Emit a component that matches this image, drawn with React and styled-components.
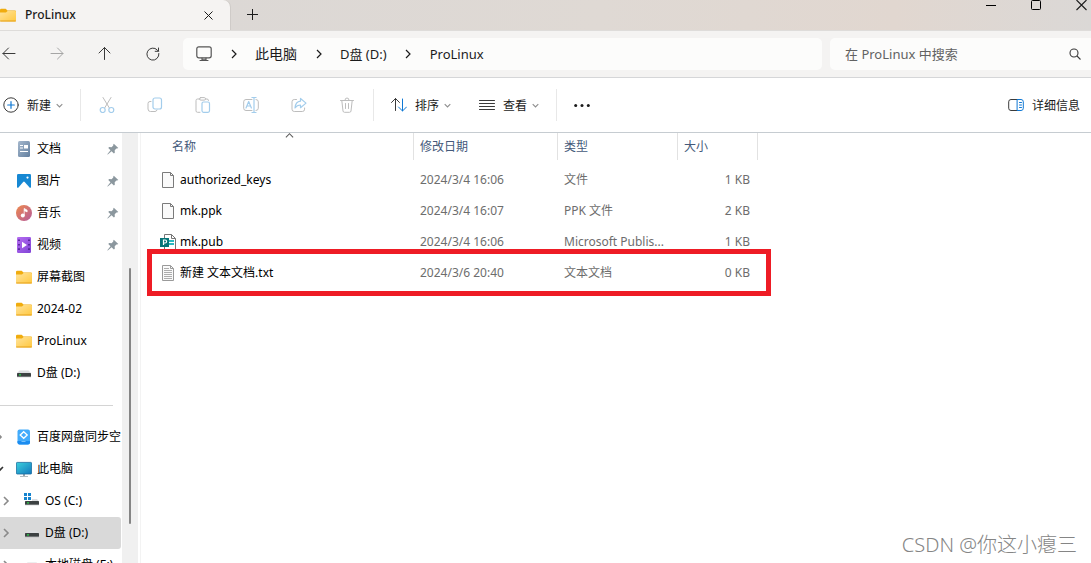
import styled, { createGlobalStyle } from "styled-components";

const GlobalStyle = createGlobalStyle`
  * {
    box-sizing: border-box;
  }

  body {
    margin: 0;
    overflow: hidden;
    font-family: "Noto Sans", "Noto Sans CJK SC", sans-serif;
    font-size: 12px;
    line-height: 16px;
    color: #1b1b1b;
    background: #ffffff;
  }

  button,
  input {
    font: inherit;
    color: inherit;
  }

  svg {
    display: block;
    flex: none;
  }
`;

const Janela = styled.div`
  position: relative;
  display: flex;
  flex-direction: column;
  height: 100vh;
  overflow: hidden;
  background: #ffffff;
`;

const BotaoIcone = styled.button`
  display: flex;
  align-items: center;
  justify-content: center;
  flex: none;
  width: ${(p) => p.$largura || 16}px;
  height: ${(p) => p.$altura || 24}px;
  padding: 0;
  border: 0;
  background: none;
`;

/* Title bar */

const BarraTitulo = styled.header`
  display: flex;
  align-items: flex-start;
  height: 31px;
  flex: none;
  background: linear-gradient(90deg, #dcd8d5 20%, #dfd9d4 55%, #e1d7d0 82%, #dbd8d6 100%);
  border-bottom: 1px solid #dedcda;
`;

const Aba = styled.div`
  display: flex;
  align-items: center;
  width: 230px;
  height: 30px;
  padding-right: 14px;
  background: #f5f3f2;
  border-radius: 0 7px 0 0;
  box-shadow: 1px 0 0 #cfcbc8;
`;

const AbaTitulo = styled.span`
  flex: 1;
  padding-left: 9px;
  font-weight: 500;
`;

const NovaAba = styled(BotaoIcone)`
  margin-left: 14px;
`;

const Controles = styled.div`
  display: flex;
  gap: 34px;
  margin-left: auto;
  padding-right: 4px;
`;

/* Navigation bar */

const BarraNavegacao = styled.nav`
  display: flex;
  align-items: center;
  height: 47px;
  flex: none;
  padding-left: 1px;
  background: #f4f3f2;
  border-bottom: 1px solid #d5d6d8;
`;

const Setas = styled.div`
  display: flex;
  gap: 32px;
  margin-right: 22px;
`;

const Endereco = styled.div`
  display: flex;
  align-items: center;
  flex: 1;
  height: 32px;
  padding-left: 13px;
  margin-right: 8px;
  background: #fcfcfb;
  border-radius: 5px;
`;

const Separador = styled.span`
  display: flex;
  justify-content: center;
  width: 43px;
`;

const Caminho = styled.a`
  color: #1b1b1b;
  font-size: ${(p) => (p.$grande ? 14 : 13)}px;
  text-decoration: none;
  white-space: nowrap;
`;

const Busca = styled.label`
  display: flex;
  align-items: center;
  width: 261px;
  height: 32px;
  padding: 0 10px 0 15px;
  background: #fcfcfb;
  border-radius: 5px 0 0 5px;
`;

const CampoBusca = styled.input`
  flex: 1;
  min-width: 0;
  padding: 0;
  border: 0;
  outline: 0;
  background: none;
  font-size: 13px;

  &::placeholder {
    color: #626262;
    opacity: 1;
  }
`;

/* Command bar */

const BarraComandos = styled.div`
  display: flex;
  align-items: center;
  height: 55px;
  flex: none;
  padding: 0 11px 0 3px;
  border-bottom: 1px solid #c6ccd1;
`;

const Comando = styled.button`
  display: flex;
  align-items: center;
  gap: 5px;
  height: 32px;
  padding: 0;
  border: 0;
  background: none;
  white-space: nowrap;
`;

const Texto = styled.span`
  padding: 2px 0 0 3px;
`;

const Grupo = styled.div`
  display: flex;
  gap: 28px;
`;

const Divisor = styled.span`
  width: 1px;
  height: 32px;
  margin: 0 17px;
  background: #e8e8e8;
`;

const Acoes = styled.div`
  display: flex;
  gap: 32px;
  margin: 0 1px;
`;

const Detalhes = styled(Comando)`
  margin-left: auto;
`;

/* Sidebar */

const Corpo = styled.div`
  display: flex;
  flex: 1;
  min-height: 0;
`;

const Lateral = styled.aside`
  width: 122px;
  flex: none;
  overflow: hidden;
`;

const Lista = styled.ul`
  margin: 0;
  padding: 0;
  list-style: none;
`;

const ItemLateral = styled.li`
  display: flex;
  align-items: center;
  height: 32px;
  margin-right: 1px;
  padding-left: ${(p) => (p.$seta ? 0 : 16)}px;
  padding-right: ${(p) => (p.$seta ? 0 : 2)}px;
  border-radius: 0 3px 3px 0;
  background: ${(p) => (p.$ativo ? "#d9d9d9" : "none")};
  color: #000000;
`;

/* The first level's arrows run past the window's left edge */
const Seta = styled.span`
  display: flex;
  flex: none;
  width: ${(p) => (p.$recuo ? 24 : 16)}px;
  padding-left: ${(p) => (p.$recuo ? 1 : 0)}px;

  svg {
    margin-left: ${(p) => (p.$recuo ? 0 : -6)}px;
  }
`;

const LinkLateral = styled.a`
  display: flex;
  align-items: center;
  gap: 5px;
  flex: 1;
  color: inherit;
  text-decoration: none;
  white-space: nowrap;
`;

const Linha = styled.hr`
  height: 1px;
  margin: 16px 9px 15px 0;
  border: 0;
  background: #d4d4d4;
`;

const Rolagem = styled.div`
  width: 16px;
  flex: none;
  padding: 135px 7px 0;
  background: #f0f0f0;
`;

const Polegar = styled.div`
  width: 2px;
  height: 256px;
  border-radius: 1px;
  background: #858585;
`;

/* File list */

const Painel = styled.main`
  flex: 1;
  min-width: 0;
  margin-left: 2px;
  border-left: 1px solid #f3f3f3;
`;

const Tabela = styled.table`
  table-layout: fixed;
  width: 617px;
  border-collapse: collapse;
`;

const Cabecalho = styled.th`
  position: relative;
  width: ${(p) => p.$largura}px;
  padding: 0 0 4px;
  font-weight: 400;
  text-align: left;
  color: #44597a;
`;

const Rotulo = styled.div`
  height: 27px;
  padding: 6px 0 0 ${(p) => p.$recuo || 6}px;
  border-right: 1px solid #e2e2e2;
`;

const Ordem = styled.span`
  position: absolute;
  top: -2px;
  left: 144px;
`;

const LinhaArquivo = styled.tr`
  position: relative;
  height: 31px;
`;

const Celula = styled.td`
  padding: 0 8px 0 6px;
  overflow: hidden;
  text-align: ${(p) => (p.$direita ? "right" : "left")};
  text-overflow: ellipsis;
  white-space: nowrap;
  color: #6d6d6d;
`;

const Nome = styled.div`
  display: flex;
  align-items: center;
  gap: 4px;
  padding-left: 13px;
  color: #000000;
`;

const Destaque = styled.div`
  position: absolute;
  inset: -8px -13px -8px 6px;
  border: 5px solid #ee1c25;
  pointer-events: none;
`;

const Marca = styled.div`
  position: absolute;
  right: 14px;
  bottom: 4px;
  font-size: 20px;
  font-weight: 300;
  line-height: 28px;
  color: #858585;
`;

function Pasta() {
  return (
    <svg width="16" height="16" viewBox="0 0 16 16">
      <defs>
        <linearGradient id="pasta" x1="0" y1="0" x2="1" y2="1">
          <stop offset="0" stopColor="#ffe39b" />
          <stop offset="1" stopColor="#ffc83f" />
        </linearGradient>
      </defs>
      <path d="M0 3a1.2 1.2 0 0 1 1.2-1.2h4.500L7.500 3.500H15a1 1 0 0 1 1 1V7H0z" fill="#f0ac0e" />
      <path d="M0 5.600h6L7.600 4H15a1 1 0 0 1 1 1v8.500a1 1 0 0 1-1 1H1a1 1 0 0 1-1-1z" fill="url(#pasta)" />
      <path d="M.2 14h15.600" stroke="#e5a01b" />
    </svg>
  );
}

function Documento() {
  return (
    <svg width="16" height="16" viewBox="0 0 16 16">
      <defs>
        <linearGradient id="doc" x1="0" y1="0" x2="1" y2="1">
          <stop offset="0" stopColor="#a5b8cd" />
          <stop offset="1" stopColor="#637f9f" />
        </linearGradient>
      </defs>
      <rect x="2" width="12" height="16" rx="1.500" fill="url(#doc)" />
      <path d="M4 4.500h3M4 7h3M4 10.500h8" stroke="#fff" />
      <path d="M8 4h4v3.500H8z" fill="#fff" />
    </svg>
  );
}

function Imagens() {
  return (
    <svg width="16" height="16" viewBox="0 0 16 16">
      <rect x="1" y="1" width="14" height="14" rx="1.300" fill="#1688d3" />
      <path d="m2 15 5.200-6.100a1 1 0 0 1 1.500 0L14 15z" fill="#fff" />
      <circle cx="11.500" cy="4.600" r="1.100" fill="#fff" />
    </svg>
  );
}

function Musica() {
  return (
    <svg width="16" height="16" viewBox="0 0 16 16">
      <defs>
        <linearGradient id="musica" x1="0" y1="0" x2="1" y2="1">
          <stop offset="0" stopColor="#ef8a4c" />
          <stop offset="1" stopColor="#b45a9c" />
        </linearGradient>
      </defs>
      <circle cx="8" cy="8" r="8" fill="url(#musica)" />
      <circle cx="6.800" cy="10.600" r="2" fill="#fff" />
      <path d="M8.200 10.500V3.500l2.900 1.700v1.700L8.200 5.500" fill="#fff" stroke="#fff" strokeWidth=".8" />
    </svg>
  );
}

function Video() {
  return (
    <svg width="16" height="16" viewBox="0 0 16 16">
      <defs>
        <linearGradient id="video" x1="0" y1="0" x2="1" y2="1">
          <stop offset="0" stopColor="#b56cf1" />
          <stop offset="1" stopColor="#8044d6" />
        </linearGradient>
      </defs>
      <rect x="1" width="14" height="16" rx="1.200" fill="url(#video)" />
      <path d="M3 2.500v12M13 2.500v12" stroke="#4a1f8c" strokeWidth="1.600" strokeDasharray="1.600 2.800" />
      <path d="M6 4.800v6.400L11 8z" fill="#fff" />
    </svg>
  );
}

function Disco({ sistema }) {
  return (
    <svg width="16" height="16" viewBox="0 0 16 16">
      {sistema ? (
        <path d="M0 0h3v3H0zM4 0h3v3H4zM0 4h3v3H0zM4 4h3v3H4z" fill="#1583ce" />
      ) : null}
      <path d={sistema ? "M8 6h5l2 2.500H8z" : "M3.500 5.500h9L15 8H1z"} fill="#dcdee0" />
      <rect x="1" y="8" width="14" height="4" rx=".6" fill="#3c4142" />
      <path d="M1 11.700h14" stroke="#8a8f91" strokeWidth=".8" />
      <circle cx="4" cy="9.800" r=".9" fill="#27e04b" />
    </svg>
  );
}

function Nuvem() {
  return (
    <svg width="16" height="16" viewBox="0 0 16 16">
      <rect x="1.500" y=".5" width="12.500" height="15" rx="2" fill="#42abfb" />
      <path d="M1.500 12H14v1.500a2 2 0 0 1-2 2H3.500a2 2 0 0 1-2-2z" fill="#1b8cf0" />
      <path d="m7.700 2.700 3.500 3.300-3.500 3.300L4.200 6z" fill="none" stroke="#fff" strokeWidth="1.300" />
      <path d="M5.500 12.500h4" stroke="#8fd0ff" strokeWidth=".8" />
    </svg>
  );
}

function Computador() {
  return (
    <svg width="16" height="16" viewBox="0 0 16 16">
      <defs>
        <linearGradient id="pc" x1="0" y1="0" x2="1" y2="1">
          <stop offset="0" stopColor="#3bd0dd" />
          <stop offset="1" stopColor="#1378bd" />
        </linearGradient>
      </defs>
      <path d="M7 13h2v2h3v.8H4V15h3z" fill="#9aa6ad" />
      <rect x=".4" y="1.400" width="15.200" height="11.600" rx=".8" fill="url(#pc)" stroke="#17699e" strokeWidth=".8" />
    </svg>
  );
}

function Pino() {
  return (
    <svg width="12" height="12" viewBox="0 0 12 12">
      <path d="M6.800.8 11.300 5l-1.200.6-.7-.1-1.700 1.800.1 2.400-.9.800L4.600 8.200.8 11.600l-.5-.3 3.200-4.100L1.300 5l.8-.9 2.500.2 1.700-1.700-.1-.9z" fill="#8b979e" />
    </svg>
  );
}

function Divisa({ cor = "#1b1b1b", direcao = "direita", tamanho = 10, grossura = 1.2 }) {
  const caminhos = {
    direita: "M3 1l4 4-4 4",
    baixo: "M1 3l4 4 4-4",
    cima: "M1 7l4-4 4 4",
  };
  return (
    <svg width={tamanho} height={tamanho} viewBox="0 0 10 10" fill="none" stroke={cor} strokeWidth={grossura}>
      <path d={caminhos[direcao]} />
    </svg>
  );
}

function Traco({ children, cor = "#3a3a3a" }) {
  return (
    <svg
      width="16"
      height="16"
      viewBox="0 0 16 16"
      fill="none"
      stroke={cor}
      strokeLinecap="round"
      strokeLinejoin="round"
    >
      {children}
    </svg>
  );
}

function Arquivo({ tipo }) {
  if (tipo === "pub") {
    return (
      <svg width="16" height="16" viewBox="0 0 16 16">
        <path d="M4.500.5h7l4 4v11h-11z" fill="#fff" stroke="#757575" />
        <path d="M11.500.5v4h4" fill="none" stroke="#757575" />
        <path d="M9 6h5v2H9zM9 9h5v2H9z" fill="#2bb9c0" />
        <rect y="4" width="9" height="9" fill="#077578" />
        <path d="M3.500 11V6h1.600a1.500 1.500 0 0 1 0 3H3.500" fill="none" stroke="#fff" strokeWidth="1.200" />
      </svg>
    );
  }
  const contorno = tipo === "txt" ? "#9a9a9a" : "#7b7b7b";
  return (
    <svg width="16" height="16" viewBox="0 0 16 16">
      <path d="M2.500.5h8l3 3v12h-11z" fill="#fafafa" stroke={contorno} />
      <path d="M10.500.5v3h3" fill="none" stroke={contorno} />
      {tipo === "txt" ? (
        <path d="M4 3.500h5M4 5.500h8M4 7.500h8M4 9.500h8M4 11.500h8M4 13.500h8" stroke="#adadad" />
      ) : null}
    </svg>
  );
}

const fixados = [
  { nome: "文档", icone: <Documento />, pino: true },
  { nome: "图片", icone: <Imagens />, pino: true },
  { nome: "音乐", icone: <Musica />, pino: true },
  { nome: "视频", icone: <Video />, pino: true },
  { nome: "屏幕截图", icone: <Pasta /> },
  { nome: "2024-02", icone: <Pasta /> },
  { nome: "ProLinux", icone: <Pasta /> },
  { nome: "D盘 (D:)", icone: <Disco /> },
];

const unidades = [
  { nome: "OS (C:)", sistema: true },
  { nome: "D盘 (D:)", ativo: true },
  { nome: "本地磁盘 (E:)" },
];

const arquivos = [
  { nome: "authorized_keys", data: "2024/3/4 16:06", tipo: "文件", tamanho: "1 KB" },
  { nome: "mk.ppk", data: "2024/3/4 16:07", tipo: "PPK 文件", tamanho: "2 KB" },
  { nome: "mk.pub", data: "2024/3/4 16:06", tipo: "Microsoft Publis...", tamanho: "1 KB", icone: "pub" },
  { nome: "新建 文本文档.txt", data: "2024/3/6 20:40", tipo: "文本文档", tamanho: "0 KB", icone: "txt", destaque: true },
];

const azul = "#a3cdec";
const cinza = "#bdbdbd";

function App() {
  return (
    <Janela>
      <GlobalStyle />
      <BarraTitulo>
        <Aba>
          <Pasta />
          <AbaTitulo>ProLinux</AbaTitulo>
          <BotaoIcone aria-label="关闭标签页">
            <svg width="9" height="9" viewBox="0 0 9 9" stroke="#1b1b1b">
              <path d="M.5.5l8 8M8.500.5l-8 8" />
            </svg>
          </BotaoIcone>
        </Aba>
        <NovaAba $altura={29} aria-label="新标签页">
          <svg width="11" height="11" viewBox="0 0 11 11" stroke="#1b1b1b">
            <path d="M5.500 0v11M0 5.500h11" />
          </svg>
        </NovaAba>
        <Controles>
          <BotaoIcone $largura={11} $altura={11} aria-label="最小化">
            <svg width="11" height="11" viewBox="0 0 11 11" stroke="#000">
              <path d="M0 5.500h10" />
            </svg>
          </BotaoIcone>
          <BotaoIcone $largura={11} $altura={11} aria-label="最大化">
            <svg width="11" height="11" viewBox="0 0 11 11" fill="none" stroke="#000">
              <rect x=".5" y=".5" width="9" height="9" rx="1" />
            </svg>
          </BotaoIcone>
          <BotaoIcone $largura={11} $altura={11} aria-label="关闭">
            <svg width="11" height="11" viewBox="0 0 11 11" stroke="#1b1b1b" strokeWidth="1.100">
              <path d="M.5 0l10 10M10.500 0l-10 10" />
            </svg>
          </BotaoIcone>
        </Controles>
      </BarraTitulo>

      <BarraNavegacao>
        <Setas>
          <BotaoIcone aria-label="后退">
            <Traco><path d="M14 7.500H2M7.500 2 2 7.500 7.500 13" /></Traco>
          </BotaoIcone>
          <BotaoIcone aria-label="前进">
            <Traco cor="#a5a5a5"><path d="M2 7.500h12M8.500 2 14 7.500 8.500 13" /></Traco>
          </BotaoIcone>
          <BotaoIcone aria-label="向上">
            <Traco><path d="M7.500 13.500v-12M2 7l5.500-5.500L13 7" /></Traco>
          </BotaoIcone>
          <BotaoIcone aria-label="刷新">
            <Traco><path d="M13.900 7.500A6 6 0 1 1 12.300 4L13.500 5.200M13.500 2v3.300h-3.300" /></Traco>
          </BotaoIcone>
        </Setas>
        <Endereco>
          <Traco cor="#555555">
            <rect x=".8" y=".8" width="14.400" height="11" rx="2" strokeWidth="1.200" />
            <path d="M6 12v2.500M10 12v2.500M4 14.500h8M6 13.300h4" strokeWidth="1.100" />
          </Traco>
          <Separador><Divisa /></Separador>
          <Caminho href="#pc" $grande>此电脑</Caminho>
          <Separador><Divisa /></Separador>
          <Caminho href="#d">D盘 (D:)</Caminho>
          <Separador><Divisa /></Separador>
          <Caminho href="#prolinux">ProLinux</Caminho>
        </Endereco>
        <Busca>
          <CampoBusca type="text" aria-label="搜索" placeholder="在 ProLinux 中搜索" />
          <svg width="12" height="12" viewBox="0 0 12 12" fill="none" stroke="#3a3a3a" strokeWidth="1.100">
            <circle cx="5" cy="5" r="4" />
            <path d="m8 8 3.500 3.500" />
          </svg>
        </Busca>
      </BarraNavegacao>

      <BarraComandos>
        <Comando>
          <Traco>
            <circle cx="8" cy="8" r="7.200" />
            <path d="M8 4.700v6.600M4.700 8h6.600" stroke="#0f78d4" strokeWidth="1.200" />
          </Traco>
          <Texto>新建</Texto>
          <Divisa cor="#8f8f8f" direcao="baixo" tamanho={7} grossura={1.6} />
        </Comando>
        <Divisor />
        <Acoes>
          <BotaoIcone aria-label="剪切">
            <Traco cor={cinza}>
              <path d="M4 .5l6.200 10.200M12 .5 5.800 10.700" />
              <g stroke={azul} strokeWidth="1.200">
                <circle cx="3.700" cy="13" r="2.500" />
                <circle cx="12.300" cy="13" r="2.500" />
              </g>
            </Traco>
          </BotaoIcone>
          <BotaoIcone aria-label="复制">
            <Traco cor={cinza}>
              <path d="M4 4.500H3a2 2 0 0 0-2 2V12a2.500 2.500 0 0 0 2.500 2.500H8a2 2 0 0 0 2-1.500" />
              <rect x="6" y="1" width="8.500" height="11" rx="2" stroke={azul} strokeWidth="1.200" />
            </Traco>
          </BotaoIcone>
          <BotaoIcone aria-label="粘贴">
            <Traco cor={cinza}>
              <path d="M5 2H2.500A1.500 1.500 0 0 0 1 3.500v10.300a1.500 1.500 0 0 0 1.500 1.500H5M10.500 2H12a1.500 1.500 0 0 1 1.500 1.500" />
              <rect x="4.500" y=".6" width="6" height="2.500" rx="1.200" />
              <rect x="7" y="5" width="7.500" height="10.300" rx="1.500" stroke={azul} strokeWidth="1.200" />
            </Traco>
          </BotaoIcone>
          <BotaoIcone aria-label="重命名">
            <Traco cor={cinza}>
              <path d="M9 2.500H3a2.300 2.300 0 0 0-2.300 2.300v6.400A2.300 2.300 0 0 0 3 13.500h6M13 2.500a2.300 2.300 0 0 1 2.300 2.300v6.400a2.300 2.300 0 0 1-2.300 2.300" />
              <path d="M3 11l2.700-6.500L8.400 11M4 9h3.500M11 .5v15M9 .5h4M9 15.500h4" stroke={azul} strokeWidth="1.200" />
            </Traco>
          </BotaoIcone>
          <BotaoIcone aria-label="共享">
            <Traco cor={cinza}>
              <path d="M5.500 2.500H3.300A2.300 2.300 0 0 0 1 4.800v7.400a2.300 2.300 0 0 0 2.300 2.300h8a2.300 2.300 0 0 0 2.300-2.300V11" />
              <path d="M9.500 1.500v2.700C6 4.500 4.300 7 4 11c1.500-2.200 3-3 5.500-3v2.700l5.500-4.600z" stroke={azul} strokeWidth="1.200" />
            </Traco>
          </BotaoIcone>
          <BotaoIcone aria-label="删除">
            <Traco cor={cinza}>
              <path d="M1.500 3.500h13M2.800 3.500 4 14a1.500 1.500 0 0 0 1.500 1.300h5A1.500 1.500 0 0 0 12 14l1.200-10.500M6 3a2 2 0 0 1 4 0M6.500 6.500v5M9.500 6.500v5" />
            </Traco>
          </BotaoIcone>
        </Acoes>
        <Divisor />
        <Grupo>
          <Comando>
            <Traco>
              <path d="M4.500 13.500v-12M.5 5.500l4-4 4 4" />
              <path d="M11.500 2v12M7.500 10l4 4 4-4" stroke="#0f78d4" />
            </Traco>
            <Texto>排序</Texto>
            <Divisa cor="#8f8f8f" direcao="baixo" tamanho={7} grossura={1.6} />
          </Comando>
          <Comando>
            <Traco><path d="M.5 3.500h15M.5 6.500h15M.5 9.500h15M.5 12.500h15" /></Traco>
            <Texto>查看</Texto>
            <Divisa cor="#8f8f8f" direcao="baixo" tamanho={7} grossura={1.6} />
          </Comando>
        </Grupo>
        <Divisor />
        <BotaoIcone aria-label="更多">
          <svg width="16" height="16" viewBox="0 0 16 16" fill="#1b1b1b">
            <circle cx="1.700" cy="8.500" r="1.500" />
            <circle cx="8" cy="8.500" r="1.500" />
            <circle cx="14.300" cy="8.500" r="1.500" />
          </svg>
        </BotaoIcone>
        <Detalhes>
          <Traco>
            <path d="M9.500 2.500H3A2.300 2.300 0 0 0 .7 4.800v6.400A2.300 2.300 0 0 0 3 13.500h6.500" />
            <path d="M9.500 2.500H13a2.300 2.300 0 0 1 2.300 2.300v6.400a2.300 2.300 0 0 1-2.300 2.300H9.500zM11.500 5.500h2M11.500 8h2M11.500 10.500h2" stroke="#0f78d4" />
          </Traco>
          <Texto>详细信息</Texto>
        </Detalhes>
      </BarraComandos>

      <Corpo>
        <Lateral>
          <Lista>
            {fixados.map((item) => (
              <ItemLateral key={item.nome}>
                <LinkLateral href="#pasta">
                  {item.icone}
                  {item.nome}
                </LinkLateral>
                {item.pino ? <Pino /> : null}
              </ItemLateral>
            ))}
          </Lista>
          <Linha />
          <Lista>
            <ItemLateral $seta>
              <Seta><Divisa cor="#8a8a8a" grossura={1.6} /></Seta>
              <LinkLateral href="#baidu">
                <Nuvem />
                百度网盘同步空
              </LinkLateral>
            </ItemLateral>
            <ItemLateral $seta>
              <Seta><Divisa cor="#333333" direcao="baixo" grossura={1.6} /></Seta>
              <LinkLateral href="#pc">
                <Computador />
                此电脑
              </LinkLateral>
            </ItemLateral>
            {unidades.map((item) => (
              <ItemLateral key={item.nome} $seta $ativo={item.ativo}>
                <Seta $recuo><Divisa cor="#8a8a8a" grossura={1.6} /></Seta>
                <LinkLateral href="#unidade">
                  <Disco sistema={item.sistema} />
                  {item.nome}
                </LinkLateral>
              </ItemLateral>
            ))}
          </Lista>
        </Lateral>
        <Rolagem>
          <Polegar />
        </Rolagem>
        <Painel>
          <Tabela>
            <thead>
              <tr>
                <Cabecalho $largura={273}>
                  <Rotulo $recuo={31}>名称</Rotulo>
                  <Ordem><Divisa cor="#5a5a5a" direcao="cima" tamanho={9} /></Ordem>
                </Cabecalho>
                <Cabecalho $largura={144}><Rotulo>修改日期</Rotulo></Cabecalho>
                <Cabecalho $largura={120}><Rotulo>类型</Rotulo></Cabecalho>
                <Cabecalho $largura={80}><Rotulo>大小</Rotulo></Cabecalho>
              </tr>
            </thead>
            <tbody>
              {arquivos.map((arq) => (
                <LinhaArquivo key={arq.nome}>
                  <Celula>
                    <Nome>
                      <Arquivo tipo={arq.icone} />
                      {arq.nome}
                    </Nome>
                    {arq.destaque ? <Destaque /> : null}
                  </Celula>
                  <Celula>{arq.data}</Celula>
                  <Celula>{arq.tipo}</Celula>
                  <Celula $direita>{arq.tamanho}</Celula>
                </LinhaArquivo>
              ))}
            </tbody>
          </Tabela>
        </Painel>
      </Corpo>
      <Marca>CSDN @你这小瘪三</Marca>
    </Janela>
  );
}

export default App;
